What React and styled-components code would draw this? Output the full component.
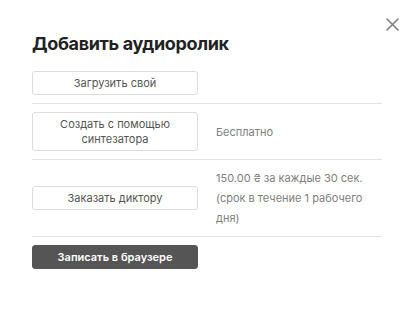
import React from 'react';
import styled, { createGlobalStyle } from 'styled-components';

const GlobalStyle = createGlobalStyle`
  body {
    margin: 0;
    background: #ffffff;
    font-family: Inter, "Noto Sans", sans-serif;
  }
`;

const Modal = styled.div`
  position: relative;
  box-sizing: border-box;
  width: 413px;
  min-height: 309px;
  padding: 33px 31px 0 32px;
  background: #ffffff;
`;

const CloseButton = styled.button`
  position: absolute;
  top: 16px;
  right: 13px;
  width: 16px;
  height: 16px;
  padding: 0;
  border: 0;
  background: none;
  cursor: pointer;
  display: flex;
  align-items: center;
  justify-content: center;
`;

const Title = styled.h2`
  margin: 0 0 16px;
  font-size: 18px;
  line-height: 22px;
  font-weight: 700;
  letter-spacing: -0.35px;
  color: #222222;
`;

const Row = styled.div`
  display: grid;
  grid-template-columns: 1fr 1fr;
  column-gap: 18px;
  align-items: center;
  padding: ${(p) => (p.$first ? '0 0 8px' : '8px 0')};
  border-bottom: 1px solid #e3e3e3;
`;

const OptionButton = styled.button`
  box-sizing: border-box;
  width: 100%;
  padding: 3.5px 8px;
  border: 1px solid ${(p) => (p.$dark ? '#555555' : '#dcdcdc')};
  border-radius: 3px;
  background: ${(p) => (p.$dark ? '#555555' : '#ffffff')};
  color: ${(p) => (p.$dark ? '#ffffff' : '#555555')};
  font-family: inherit;
  font-size: 11px;
  line-height: 15px;
  font-weight: ${(p) => (p.$dark ? 600 : 400)};
  text-align: center;
  cursor: pointer;
`;

const Note = styled.div`
  font-size: 11px;
  line-height: 20px;
  color: #808080;
`;

const Footer = styled.div`
  display: grid;
  grid-template-columns: 1fr 1fr;
  column-gap: 18px;
  padding-top: 8px;
`;

function CloseIcon() {
  return (
    <svg width="13" height="13" viewBox="0 0 13 13" fill="none">
      <path d="M1 1L12 12M12 1L1 12" stroke="#7a7a7a" strokeWidth="1.5" strokeLinecap="round" />
    </svg>
  );
}

export default function App() {
  return (
    <>
      <GlobalStyle />
      <Modal>
        <CloseButton aria-label="Закрыть">
          <CloseIcon />
        </CloseButton>
        <Title>Добавить аудиоролик</Title>
        <Row $first>
          <OptionButton>Загрузить свой</OptionButton>
        </Row>
        <Row>
          <OptionButton>
            Создать с помощью
            <br />
            синтезатора
          </OptionButton>
          <Note>Бесплатно</Note>
        </Row>
        <Row>
          <OptionButton>Заказать диктору</OptionButton>
          <Note>150.00 ₴ за каждые 30 сек. (срок в течение 1 рабочего дня)</Note>
        </Row>
        <Footer>
          <OptionButton $dark>Записать в браузере</OptionButton>
        </Footer>
      </Modal>
    </>
  );
}
